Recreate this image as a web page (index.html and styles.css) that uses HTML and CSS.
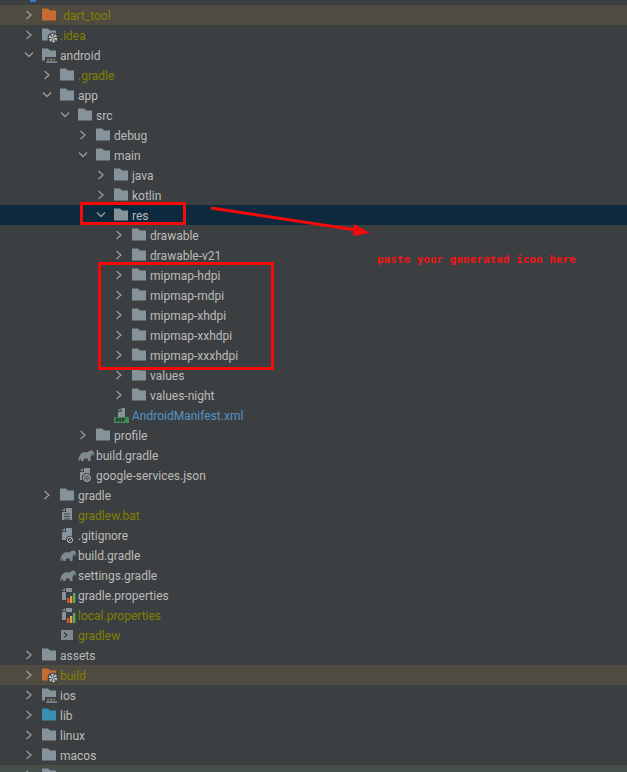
FILE: index.html
```html
<!DOCTYPE html>
<html lang="en">
<head>
<meta charset="utf-8">
<title>Project tree</title>
<link rel="stylesheet" href="styles.css">
</head>
<body>
<svg class="defs" aria-hidden="true">
  <defs>
    <path id="right" d="M5.5 4L10 8L5.5 12" fill="none" stroke="#9b9b9b" stroke-width="1.3"/>
    <path id="down" d="M4 5.5L8 9.5L12 5.5" fill="none" stroke="#9b9b9b" stroke-width="1.3"/>
    <path id="folder" d="M0 1.5H6L8 3.5H14V13.5H0Z" fill="#87939a"/>
    <path id="folder-orange" d="M0 1.5H6L8 3.5H14V13.5H0Z" fill="#c76b35"/>
    <path id="folder-blue" d="M0 1.5H6L8 3.5H14V13.5H0Z" fill="#3a8fb0"/>
    <g id="pin">
      <circle cx="11" cy="11" r="5.5" fill="#3c3f41"/>
      <path d="M11 11L15.500 11L14.400 13.900ZM11 11L13.250 14.900L10.200 15.400ZM11 11L8.750 14.900L6.800 12.500ZM11 11L6.500 11L7.600 8.100ZM11 11L8.750 7.100L11.800 6.600ZM11 11L13.250 7.100L15.200 9.500Z" fill="#b9c0c4"/>
    </g>
    <g id="module">
      <path d="M0 1.500H6L8 3.500H14V13.500H0Z" fill="#87939a"/>
      <rect x="3" y="10" width="13" height="6" fill="#3c3f41"/>
      <path d="M4 15H15" stroke="#b5bcc0" stroke-width="1"/>
      <path d="M5 12.500H7" stroke="#59a869" stroke-width="1.600"/>
      <path d="M8 12.500H10" stroke="#87939a" stroke-width="1.600"/>
      <path d="M11 12.500H13" stroke="#c76b35" stroke-width="1.600"/>
    </g>
    <path id="page" d="M2 4L5 1V4ZM6 1H12V13H2V5H6Z" fill="#87939a"/>
    <path id="file" d="M4 4L6.500 1V4ZM7.500 1H11V10H4V5H7.500Z" fill="#87939a"/>
    <path id="elephant" d="M0.300 13.500C0.800 10 2 6.500 5 5.500C7 4.800 9 5.400 10 5.400C11 3.600 13 3 14.400 3.800C15.600 4.600 16 6.400 15.800 8.500L14.600 8.600C14.700 7.600 14.300 6.600 13.600 6.500C13.800 8 13.200 9.500 12.500 10L12.500 14H10L9.500 11.500H6L5.500 14H3L2.800 11.500C2 12 1.500 13 1.300 14Z" fill="#7f8b91"/>
    <g id="bars">
      <rect x="6" y="5" width="10" height="11" fill="#3c3f41"/>
      <rect x="7" y="11" width="2.300" height="5" fill="#e2562c"/>
      <rect x="10" y="9" width="2.300" height="7" fill="#e8a33d"/>
      <rect x="13" y="6" width="2.300" height="10" fill="#59a869"/>
    </g>
  </defs>
</svg>

<main class="tree">
  <div class="row l1 top-row"><span class="peek"></span></div>

  <div class="row l1 ignored"><svg class="chev"><use href="#right"/></svg><svg class="ico"><use href="#folder-orange"/></svg><span class="olive">.dart_tool</span></div>
  <div class="row l1"><svg class="chev"><use href="#right"/></svg><svg class="ico"><use href="#folder"/><use href="#pin"/></svg><span class="olive">.idea</span></div>
  <div class="row l1"><svg class="chev"><use href="#down"/></svg><svg class="ico"><use href="#module"/></svg><span>android</span></div>
  <div class="row l2"><svg class="chev"><use href="#right"/></svg><svg class="ico"><use href="#folder"/></svg><span class="olive">.gradle</span></div>
  <div class="row l2"><svg class="chev"><use href="#down"/></svg><svg class="ico"><use href="#folder"/></svg><span>app</span></div>
  <div class="row l3"><svg class="chev"><use href="#down"/></svg><svg class="ico"><use href="#folder"/></svg><span>src</span></div>
  <div class="row l4"><svg class="chev"><use href="#right"/></svg><svg class="ico"><use href="#folder"/></svg><span>debug</span></div>
  <div class="row l4"><svg class="chev"><use href="#down"/></svg><svg class="ico"><use href="#folder"/></svg><span>main</span></div>
  <div class="row l5"><svg class="chev"><use href="#right"/></svg><svg class="ico"><use href="#folder"/></svg><span>java</span></div>
  <div class="row l5"><svg class="chev"><use href="#right"/></svg><svg class="ico"><use href="#folder"/></svg><span>kotlin</span></div>
  <div class="row l5 selected"><svg class="chev"><use href="#down"/></svg><svg class="ico"><use href="#folder"/></svg><span>res</span></div>
  <div class="row l6"><svg class="chev"><use href="#right"/></svg><svg class="ico"><use href="#folder"/></svg><span>drawable</span></div>
  <div class="row l6"><svg class="chev"><use href="#right"/></svg><svg class="ico"><use href="#folder"/></svg><span>drawable-v21</span></div>
  <div class="row l6"><svg class="chev"><use href="#right"/></svg><svg class="ico"><use href="#folder"/></svg><span>mipmap-hdpi</span></div>
  <div class="row l6"><svg class="chev"><use href="#right"/></svg><svg class="ico"><use href="#folder"/></svg><span>mipmap-mdpi</span></div>
  <div class="row l6"><svg class="chev"><use href="#right"/></svg><svg class="ico"><use href="#folder"/></svg><span>mipmap-xhdpi</span></div>
  <div class="row l6"><svg class="chev"><use href="#right"/></svg><svg class="ico"><use href="#folder"/></svg><span>mipmap-xxhdpi</span></div>
  <div class="row l6"><svg class="chev"><use href="#right"/></svg><svg class="ico"><use href="#folder"/></svg><span>mipmap-xxxhdpi</span></div>
  <div class="row l6"><svg class="chev"><use href="#right"/></svg><svg class="ico"><use href="#folder"/></svg><span>values</span></div>
  <div class="row l6"><svg class="chev"><use href="#right"/></svg><svg class="ico"><use href="#folder"/></svg><span>values-night</span></div>
  <div class="row l5 leaf"><svg class="ico"><use href="#file"/><rect x="0" y="10" width="15" height="6" fill="#3c8b57"/><text x="1.500" y="15.400" class="mf">MF</text></svg><span class="blue">AndroidManifest.xml</span></div>
  <div class="row l4"><svg class="chev"><use href="#right"/></svg><svg class="ico"><use href="#folder"/></svg><span>profile</span></div>
  <div class="row l3 leaf"><svg class="ico"><use href="#elephant"/></svg><span>build.gradle</span></div>
  <div class="row l3 leaf"><svg class="ico"><use href="#page"/><circle cx="9" cy="11" r="5" fill="#3c3f41"/><circle cx="9" cy="11" r="3.500" fill="none" stroke="#b5bcc0" stroke-width=".9"/><path d="M9 7.500V14.500M7.500 8.500Q6.500 11 7.500 13.500M10.500 8.500Q11.500 11 10.500 13.500" fill="none" stroke="#b5bcc0" stroke-width=".7"/></svg><span>google-services.json</span></div>
  <div class="row l2"><svg class="chev"><use href="#right"/></svg><svg class="ico"><use href="#folder"/></svg><span>gradle</span></div>
  <div class="row l2 leaf"><svg class="ico"><use href="#page"/><path d="M4 7H10M4 9.500H10M4 12H10" stroke="#3c3f41" stroke-width="1"/></svg><span class="olive">gradlew.bat</span></div>
  <div class="row l2 leaf"><svg class="ico"><use href="#page"/><circle cx="10" cy="13" r="4" fill="#3c3f41"/><circle cx="10" cy="13" r="2.700" fill="none" stroke="#b5bcc0" stroke-width=".9"/><path d="M8 15L12 11" stroke="#b5bcc0" stroke-width=".9"/></svg><span>.gitignore</span></div>
  <div class="row l2 leaf"><svg class="ico"><use href="#elephant"/></svg><span>build.gradle</span></div>
  <div class="row l2 leaf"><svg class="ico"><use href="#elephant"/></svg><span>settings.gradle</span></div>
  <div class="row l2 leaf"><svg class="ico"><use href="#page"/><use href="#bars"/></svg><span>gradle.properties</span></div>
  <div class="row l2 leaf"><svg class="ico"><use href="#page"/><use href="#bars"/></svg><span class="olive">local.properties</span></div>
  <div class="row l2 leaf"><svg class="ico"><rect x="1" y="3" width="12" height="10" fill="#7f8a90"/><path d="M4 5.500L7 8L4 10.500" fill="none" stroke="#3c3f41" stroke-width="1.300"/></svg><span class="olive">gradlew</span></div>
  <div class="row l1"><svg class="chev"><use href="#right"/></svg><svg class="ico"><use href="#folder"/></svg><span>assets</span></div>
  <div class="row l1 ignored"><svg class="chev"><use href="#right"/></svg><svg class="ico"><use href="#folder-orange"/><g class="on-ignored"><use href="#pin"/></g></svg><span class="olive">build</span></div>
  <div class="row l1"><svg class="chev"><use href="#right"/></svg><svg class="ico"><use href="#module"/></svg><span>ios</span></div>
  <div class="row l1"><svg class="chev"><use href="#right"/></svg><svg class="ico"><use href="#folder-blue"/></svg><span>lib</span></div>
  <div class="row l1"><svg class="chev"><use href="#right"/></svg><svg class="ico"><use href="#folder"/></svg><span>linux</span></div>
  <div class="row l1"><svg class="chev"><use href="#right"/></svg><svg class="ico"><use href="#folder"/></svg><span>macos</span></div>
  <div class="row l1 changed"><svg class="chev"><use href="#right"/></svg><svg class="ico"><use href="#folder"/></svg></div>
</main>

<div class="mark mark-res"></div>
<div class="mark mark-mipmap"></div>
<svg class="arrow" viewBox="0 0 170 40" aria-hidden="true">
  <path d="M1 2L146 24" stroke="#f50a0a" stroke-width="3"/>
  <path d="M144 18L160 27L143 30Z" fill="#f50a0a"/>
</svg>
<p class="note">paste your generated icon here</p>
</body>
</html>
```
FILE: styles.css
```css
html, body {
  margin: 0;
  height: 100%;
  overflow: hidden;
  background: #3c3f41;
}

body {
  position: relative;
  font-family: Roboto, "Open Sans", sans-serif;
  font-size: 12px;
  color: #bbbbbb;
}

.defs {
  position: absolute;
  width: 0;
  height: 0;
}

.tree {
  display: flex;
  flex-direction: column;
  margin-top: -15px;
}

.row {
  display: flex;
  align-items: center;
  flex: none;
  height: 20px;
  line-height: 20px;
  white-space: nowrap;
}

.row span {
  position: relative;
  top: 1px;
}

.l1 { padding-left: 21px; }
.l2 { padding-left: 39px; }
.l3 { padding-left: 57px; }
.l4 { padding-left: 75px; }
.l5 { padding-left: 93px; }
.l6 { padding-left: 111px; }

.chev {
  flex: none;
  width: 16px;
  height: 16px;
  margin-right: 5px;
}

.leaf .ico {
  margin-left: 21px;
}

.ico {
  flex: none;
  width: 16px;
  height: 16px;
  margin-right: 2px;
}

.ignored { background: #4f4b41; }
.selected { background: #0d293e; }
.changed { background: #45504a; }

.olive { color: #808000; }
.blue { color: #5394c6; }

.mf {
  font-family: "DejaVu Sans", sans-serif;
  font-size: 6px;
  font-weight: 700;
  fill: #2b2f31;
}

.top-row .peek {
  position: absolute;
  top: 0;
  left: 30px;
  width: 6px;
  height: 2px;
  background: #2f7fc4;
}

.mark {
  position: absolute;
  box-sizing: border-box;
  border: 3px solid #f50a0a;
}

.mark-res {
  left: 80px;
  top: 202px;
  width: 106px;
  height: 23px;
}

.mark-mipmap {
  left: 98px;
  top: 262px;
  width: 176px;
  height: 108px;
}

.arrow {
  position: absolute;
  left: 210px;
  top: 206px;
  width: 170px;
  height: 40px;
}

.note {
  position: absolute;
  left: 377px;
  top: 252px;
  margin: 0;
  font-family: "DejaVu Sans Mono", monospace;
  font-size: 11px;
  font-weight: 700;
  line-height: 16px;
  color: #f01414;
  white-space: nowrap;
}
```
